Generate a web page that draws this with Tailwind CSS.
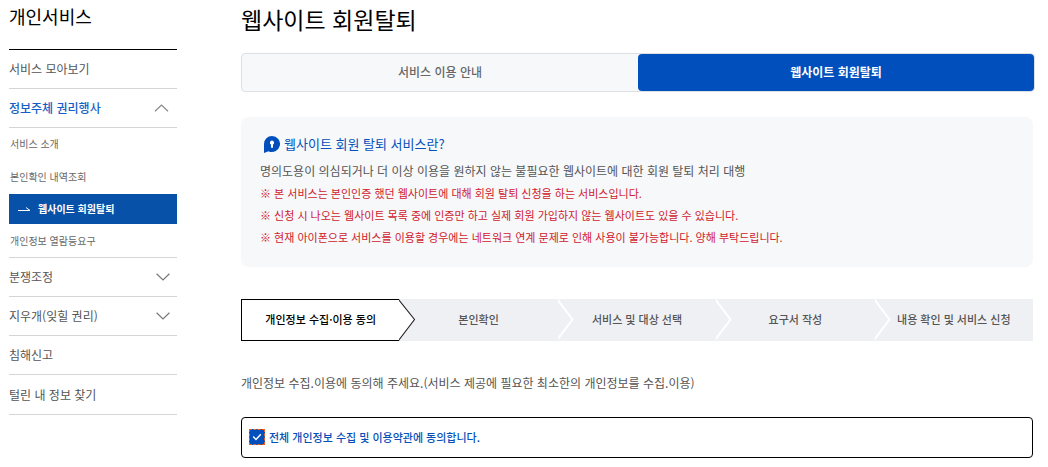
<!DOCTYPE html>
<html lang="ko">
<head>
<meta charset="utf-8">
<meta name="viewport" content="width=device-width, initial-scale=1">
<title>웹사이트 회원탈퇴</title>
<script src="https://cdn.jsdelivr.net/npm/@tailwindcss/browser@4"></script>
</head>
<body class="bg-white font-['Noto_Sans_CJK_KR',sans-serif] text-xs text-[#555]">
<div class="flex gap-16 pl-[9px] pr-[15px]">
  <aside class="w-[168px] shrink-0">
    <h2 class="h-[50px] border-b border-black pt-1 text-lg leading-6 text-black">개인서비스</h2>
    <nav aria-label="개인서비스">
      <ul>
        <li class="border-b border-[#d5d5d5]"><a href="#" class="flex h-[38px] items-center">서비스 모아보기</a></li>
        <li class="border-b border-[#d5d5d5]">
          <button type="button" aria-expanded="true" class="flex h-[38px] w-full items-center justify-between pr-2 font-medium text-[#1560c4]">정보주체 권리행사
            <svg class="h-2 w-[15px]" viewBox="0 0 15 8" fill="none" stroke="#888" stroke-width="1.2"><path d="M1 7.3 7.5 1 14 7.3"/></svg>
          </button>
        </li>
        <li class="border-b border-[#d5d5d5]">
          <ul class="text-[10px] text-[#666]">
            <li><a href="#" class="flex h-8 items-center pl-px">서비스 소개</a></li>
            <li><a href="#" class="flex h-[34px] items-center pl-px">본인확인 내역조회</a></li>
            <li><a href="#" aria-current="page" class="flex h-[30px] items-center gap-[7px] bg-[#0751a8] pl-2 font-bold text-white">
              <svg class="h-2 w-[14px]" viewBox="0 0 14 8" fill="none" stroke="#fff" stroke-width="1"><path d="M1 5.5H13L9 2.5"/></svg>웹사이트 회원탈퇴</a></li>
            <li><a href="#" class="flex h-[33px] items-center pl-px">개인정보 열람등요구</a></li>
          </ul>
        </li>
        <li class="border-b border-[#d5d5d5]">
          <button type="button" aria-expanded="false" class="flex h-[38px] w-full items-center justify-between pr-[7px]">분쟁조정
            <svg class="h-2 w-[14px]" viewBox="0 0 14 8" fill="none" stroke="#777" stroke-width="1.2"><path d="M.6 .8 7 7 13.4 .8"/></svg>
          </button>
        </li>
        <li class="border-b border-[#d5d5d5]">
          <button type="button" aria-expanded="false" class="flex h-[38px] w-full items-center justify-between pr-[7px]">지우개(잊힐 권리)
            <svg class="h-2 w-[14px]" viewBox="0 0 14 8" fill="none" stroke="#777" stroke-width="1.2"><path d="M.6 .8 7 7 13.4 .8"/></svg>
          </button>
        </li>
        <li class="border-b border-[#d5d5d5]"><a href="#" class="flex h-[38px] items-center">침해신고</a></li>
        <li class="border-b border-[#d5d5d5]"><a href="#" class="flex h-[39px] items-center">털린 내 정보 찾기</a></li>
      </ul>
    </nav>
  </aside>

  <main class="min-w-0 flex-1">
    <h1 class="pt-[3px] text-[23px] leading-8 text-black">웹사이트 회원탈퇴</h1>
    <nav aria-label="회원탈퇴" class="-mr-0.5 mt-[18px] flex h-[39px] rounded border border-[#dcdfe3] bg-[#f6f8fa]">
      <a href="#" class="flex flex-1 items-center justify-center pb-px font-medium text-[#666]">서비스 이용 안내</a>
      <a href="#" aria-current="page" class="flex flex-1 items-center justify-center rounded bg-[#004fbd] pb-px font-bold text-white">웹사이트 회원탈퇴</a>
    </nav>

    <section class="mt-[25px] h-[150px] rounded-lg bg-[#f6f8fa] px-[19px] pt-[15px]">
      <h2 class="flex h-6 items-center gap-1 pl-1 text-[13px] text-[#0550b8]">
        <svg class="h-[17px] w-4" viewBox="0 0 16 17"><path d="M8 0a8 8 0 1 1-3.500 15.200L0 17V8a8 8 0 0 1 8-8Z" fill="#004fbd"/><path d="M8 4.500a2.200 2.200 0 0 0-1 4.100v3.200h2V8.600a2.200 2.200 0 0 0-1-4.100Z" fill="#fff"/></svg>
        웹사이트 회원 탈퇴 서비스란?
      </h2>
      <p class="mt-1 leading-[22px]">명의도용이 의심되거나 더 이상 이용을 원하지 않는 불필요한 웹사이트에 대한 회원 탈퇴 처리 대행</p>
      <ul class="text-[11px] leading-[22px] text-[#d0202c]">
        <li>※ 본 서비스는 본인인증 했던 웹사이트에 대해 회원 탈퇴 신청을 하는 서비스입니다.</li>
        <li>※ 신청 시 나오는 웹사이트 목록 중에 인증만 하고 실제 회원 가입하지 않는 웹사이트도 있을 수 있습니다.</li>
        <li>※ 현재 아이폰으로 서비스를 이용할 경우에는 네트워크 연계 문제로 인해 사용이 불가능합니다. 양해 부탁드립니다.</li>
      </ul>
    </section>

    <ol class="mt-8 grid h-[42px] grid-cols-5 bg-[#eff0f4] text-[11px] font-medium text-[#555]">
      <li aria-current="step" class="relative flex items-center justify-center border border-r-0 border-black bg-white pb-0.5 text-black">개인정보 수집·이용 동의
        <svg class="absolute -top-px left-full h-[42px] w-[17px]" viewBox="0 0 17 42"><path d="M-1 0 15 20.500-1 42Z" fill="#fff"/><path d="M-.5 .5 15.500 20.500-.5 41.500" fill="none" stroke="#222" stroke-width="1.1"/></svg>
      </li>
      <li class="relative flex items-center justify-center pb-0.5">본인확인
        <svg class="absolute left-full top-0 h-[42px] w-[17px]" viewBox="1 0 17 42" fill="none" stroke="#fff" stroke-width="2"><path d="M0 0 15.500 20.500 0 41"/></svg>
      </li>
      <li class="relative flex items-center justify-center pb-0.5">서비스 및 대상 선택
        <svg class="absolute left-full top-0 h-[42px] w-[17px]" viewBox="1 0 17 42" fill="none" stroke="#fff" stroke-width="2"><path d="M0 0 15.500 20.500 0 41"/></svg>
      </li>
      <li class="relative flex items-center justify-center pb-0.5">요구서 작성
        <svg class="absolute left-full top-0 h-[42px] w-[17px]" viewBox="1 0 17 42" fill="none" stroke="#fff" stroke-width="2"><path d="M0 0 15.500 20.500 0 41"/></svg>
      </li>
      <li class="flex items-center justify-center pb-0.5">내용 확인 및 서비스 신청</li>
    </ol>

    <p class="mt-8 leading-5">개인정보 수집.이용에 동의해 주세요.(서비스 제공에 필요한 최소한의 개인정보를 수집.이용)</p>
    <label for="agree-all" class="mt-6 flex h-[41px] items-center gap-1 rounded border border-black px-[7px] pb-px text-[11px] font-medium text-[#0550b8]">
      <span class="grid size-4 place-items-center">
        <input id="agree-all" type="checkbox" checked class="peer col-start-1 row-start-1 size-4 appearance-none border border-dashed border-[#e8622c] bg-white checked:bg-[#004fbd]">
        <svg class="pointer-events-none col-start-1 row-start-1 hidden h-2 w-2.5 peer-checked:block" viewBox="0 0 10 8" fill="none" stroke="#fff" stroke-width="1.4"><path d="M1.200 3.600 4 6.400 8.800 1.200"/></svg>
      </span>
      전체 개인정보 수집 및 이용약관에 동의합니다.
    </label>
  </main>
</div>
</body>
</html>
